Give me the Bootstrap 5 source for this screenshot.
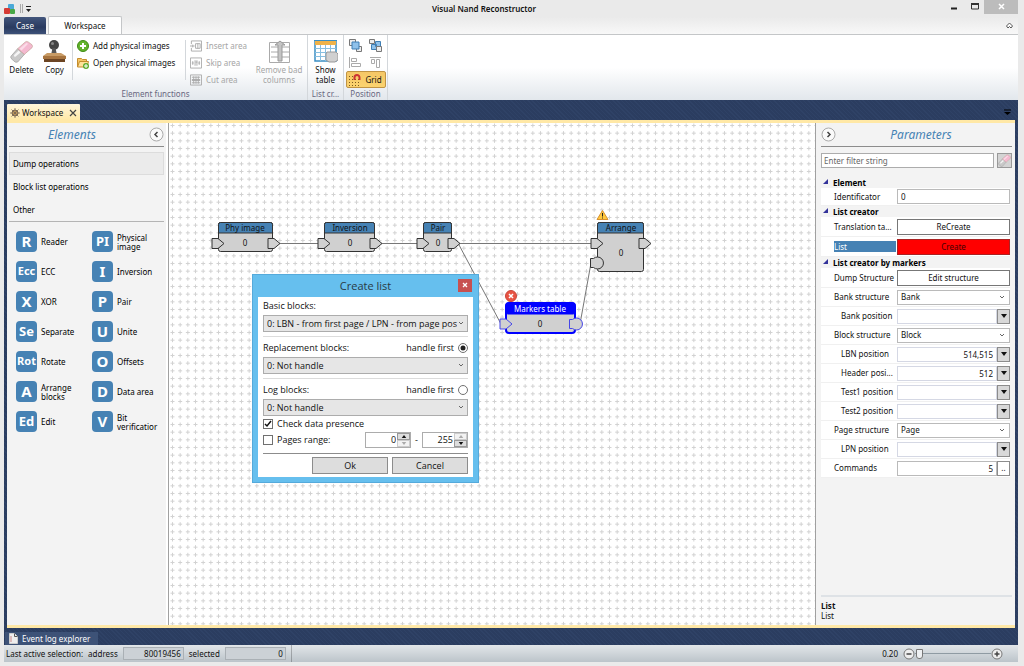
<!DOCTYPE html>
<html lang="en">
<head>
<meta charset="utf-8">
<meta name="viewport" content="width=device-width, initial-scale=1">
<title>Visual Nand Reconstructor</title>
<link href="https://cdn.jsdelivr.net/npm/bootstrap@5.3.0/dist/css/bootstrap.min.css" rel="stylesheet">
<style>
:root{--blue:#4682b4;--navy:#2b3d60;--sand:#ffe8a6}
body{font:8px/10px "Noto Sans","Open Sans",sans-serif;color:#111;background:#eaeaea;padding:0 6px 4px 4px}
button,input,select{font:inherit;color:inherit;border-radius:0}
button{background:none;border:0;padding:0}
svg{display:block;flex:none}
.app-title{height:17px}
.app-title h1{font-size:8px;line-height:17px;font-weight:600;margin:0;padding-right:8px}
.win-btn{width:20px;height:14px}
.win-close{width:34px;height:14px;background:#bcbcbc;color:#fff}
.tab-strip{height:18px;background:linear-gradient(#eaeaea,#f8f8f8);border-bottom:1px solid #c4c6c8}
.case-tab{width:42px;height:17px;background:linear-gradient(#42557c,#2a3b60 60%,#3c5078);color:#fff;font-size:8px;border-radius:2px 2px 0 0}
.work-tab{width:74px;height:18px;background:#fff;border:1px solid #c4c6c8;border-bottom:0;border-radius:2px 2px 0 0;margin-left:2px}
.ribbon{height:65px;background:linear-gradient(#fff 50%,#e2e7ec)}
.rgroup{border-right:1px solid #d3d7db;padding-top:2px}
.rgroup-name{color:#686880;line-height:12px;text-align:center}
.rbig{padding:3px 0 0;text-align:center;display:flex;flex-direction:column;align-items:center;gap:2px;line-height:10px}
.rsmall{display:flex;align-items:center;gap:4px;height:17px;white-space:nowrap}
.off{color:#a5a5a5}
.vsep{width:1px;background:#d3d7db;margin:3px 4px 8px 2px}
.grid-btn{width:40px;height:17px;background:linear-gradient(#f5c766,#fbd36f);border:1px solid #c09444;border-radius:2px}
.main-area{min-height:0;padding:4px 3px 0;background:repeating-linear-gradient(45deg,#2b3d60 0 2px,#2f4266 2px 3px)}
.doc-tab{width:73px;height:16px;background:linear-gradient(#fff5dc,#ffe8a6);border-radius:1px 1px 0 0;padding:1px 3px 0;gap:2px}
.doc-body{min-height:0;border:solid var(--sand);border-width:3px 0;background:#f3f3f3}
.side-l{width:162px;border-right:1px solid #a0a0a0;background:linear-gradient(90deg,#f3f3f3 159px,#fff 159px);padding:0 4px 0 2px}
.side-r{width:200px;border-left:1px solid #a0a0a0;padding:0 3px 0 5px}
.pane-head{height:24px;border-bottom:1px solid #8c8c8c}
.pane-head h2{font-size:12px;line-height:22px;font-style:italic;font-weight:400;color:var(--blue);margin:0;padding-right:14px}
.side-r .pane-head h2{padding-right:6px}
.cats{padding-top:5px;border-bottom:1px solid #b4b4b4}
.cats a{display:block;height:23px;line-height:22px;padding:0 3px;color:#000;text-decoration:none;border:1px solid transparent}
.cats a.on{background:#ebebeb;border-color:#dcdcdc}
.tiles{display:grid;grid-template-columns:76px 1fr;grid-auto-rows:21px;row-gap:9px;padding:9px 0 0 7px}
.tile{display:flex;align-items:center;gap:4px;color:#000;text-align:left;white-space:nowrap;overflow:hidden}
.tile b{flex:none;width:21px;height:21px;line-height:20px;border-radius:4px;background:var(--blue);color:#fff;text-align:center;font-size:15px}
.tile b.md{font-size:13px}
.tile b.sm{font-size:11px}
.tile span{line-height:9px}
.board{min-width:0;background:#fff;overflow:hidden}
.board text{font-size:8px;text-anchor:middle;fill:#111}
.dlg{position:absolute;left:83px;top:151px;width:227px;background:#66bfee;border:1px solid #55aadb;padding:0 5px 5px;font-family:"Open Sans","Noto Sans",sans-serif;font-size:9px}
.dlg h3{font-size:11px;line-height:22px;height:22px;margin:0;text-align:center;font-weight:400;color:#2b3a44}
.dlg-x{position:absolute;right:6px;top:4px;width:14px;height:13px;background:#c75050;color:#fff}
.dlg-in{background:#fff;padding:4px 5px 3px}
.drop{appearance:none;width:100%;border:1px solid #acacac;padding:0 14px 0 4px;background:#fff url("data:image/svg+xml,%3Csvg xmlns='http://www.w3.org/2000/svg' width='6' height='5'%3E%3Cpath d='M1 1l2 2 2-2' fill='none' stroke='%23666'/%3E%3C/svg%3E") no-repeat right 4px center;text-overflow:clip}
.dlg .drop{height:17px;padding:0 10px 0 3px;background-color:#e6e6e6;background-position:right 3px center;display:block}
.rule{border-top:1px solid #dcdcdc;margin:4px 0 3px}
.rule.dark{border-color:#8c8c8c;margin-top:5px}
.dlg-row{height:14px}
.dlg-row.split{padding-top:2px;margin-bottom:3px}
.check-row{padding:3px 0}
.form-check-input.opt{width:10px;height:10px;margin:0;border:1px solid #707070;float:none;box-shadow:none;background-size:10px}
.form-check-input.opt:checked{background-color:#fff;background-image:url("data:image/svg+xml,%3Csvg xmlns='http://www.w3.org/2000/svg' viewBox='0 0 10 10'%3E%3Cpath d='M2 5l2 2 4-5' fill='none' stroke='%23111' stroke-width='1.5'/%3E%3C/svg%3E")}
.form-check-input.opt[type=radio]:checked{background-image:url("data:image/svg+xml,%3Csvg xmlns='http://www.w3.org/2000/svg' viewBox='0 0 10 10'%3E%3Ccircle cx='5' cy='5' r='2.5' fill='%23222'/%3E%3C/svg%3E")}
.form-check-input.opt[type=checkbox]{border-radius:0}
.spin{width:46px;height:16px;border:1px solid #acacac}
.spin input{width:31px;border:0;padding:0 1px;text-align:right}
.spin .ud{width:13px}
.spin .ud button{height:7px;width:13px;background:#ddd;border:1px solid #999;display:flex;align-items:center;justify-content:center}
.spin .ud button:disabled{background:#f2f2f2;border-color:#ccc;color:#aaa}
.push{width:76px;height:17px;background:#ddd;border:1px solid #8c8c8c}
.filter-row{padding-top:6px;gap:3px}
.filter{height:15px;border:1px solid #acacac;padding:0 2px;min-width:0}
.filter::placeholder{color:#666;opacity:1}
.era{width:15px;height:15px;background:#d4d4d4;border:1px solid #999}
.props{margin-right:2px;padding-top:9px}
.prop-head{font-size:8px;line-height:11px;height:11px;font-weight:700;margin:0;padding-left:12px;position:relative;color:#000}
.prop-head::before{content:"";position:absolute;left:2px;top:2px;border:solid transparent;border-width:0 0 5px 5px;border-bottom-color:#33339a}
.prop{display:flex;align-items:center;height:19px;background:#fff;border-bottom:1px solid #f0f0f0;white-space:nowrap}
.prop>label,.prop>span{flex:none;width:76px;padding-left:13px;overflow:hidden}
.prop.sub>label{padding-left:20px}
.prop.tall{height:20px}
.prop.first{height:18px}
.field{flex:1;min-width:0;height:15px;border:1px solid #bababa;padding:0 3px;background-color:#fff}
.prop .btn-face{height:16px;border-color:#777}
.prop .hot{background:red;border-color:#a22;color:#400}
.num{text-align:right;border-color:#d5d8e4}
.dd{width:13px;height:15px;background:#d8d8d8;border:1px solid #8c8c8c;display:flex;align-items:center;justify-content:center}
.picked{background:var(--blue);color:#fff;display:block;line-height:11px;margin-right:1px}
.log-tab{height:13px;width:93px;background:#3d5277;color:#fff;line-height:13px;margin-left:-2px;padding:0 4px;gap:4px}
.log-bar{height:17px;padding-top:4px}
.status{height:17px;background:linear-gradient(#e2e6e9,#bcc4ca);padding:0 15px 0 2px;gap:5px}
.readout{width:61px;height:13px;border:1px solid #aab0b5;text-align:right;line-height:11px;padding-right:2px;background:#ccd1d6}
.zoomer{appearance:none;width:76px;height:12px;background:linear-gradient(#8f9ba3,#8f9ba3) center/100% 1px no-repeat;margin:0}
.zoomer::-webkit-slider-thumb{appearance:none;width:7px;height:10px;border:1px solid #777;background:#eef0f2;border-radius:0 0 3px 3px}
</style>
</head>
<body class="vh-100 d-flex flex-column overflow-hidden">
<svg width="0" height="0" class="position-absolute" aria-hidden="true">
 <defs>
  <symbol id="eraser" viewBox="0 0 24 24"><path d="M1 17 8 9l7 6-7 8q-2 1-4-1l-2-2q-2-2-1-3z" fill="#c9c9c9" stroke="#999" stroke-width=".7"/><path d="m8 9 8-7q1-1 3 0l4 3q1 2 0 3l-8 7z" fill="#f4b9d0" stroke="#b98" stroke-width=".6"/><path d="m4 16 5-5 2 2-6 5z" fill="#f5f5f5"/><path d="m10 9 7-6 2 1-7 7z" fill="#fbdbe7"/></symbol>
  <symbol id="down" viewBox="0 0 6 4"><path d="M0 0h6L3 4z" fill="currentColor"/></symbol>
  <symbol id="up" viewBox="0 0 6 4"><path d="M0 4h6L3 0z" fill="currentColor"/></symbol>
 </defs>
</svg>

<header class="app-title d-flex align-items-start">
 <div class="d-flex align-items-center h-100">
  <svg width="28" height="12" viewBox="0 0 28 12"><rect x="4" y="1" width="6" height="6" rx="1" fill="#4aa9d8"/><rect x="0" y="5" width="6" height="6" rx="1" fill="#d53a34"/><rect x="6" y="6" width="5" height="5" rx="1" fill="#49a846"/><path d="M16.500 1v9M18.500 1v9" stroke="#aaa"/><path d="M22 3.500h5" stroke="#222"/><path d="M22 6h5l-2.500 3z" fill="#222"/></svg>
 </div>
 <h1 class="flex-fill text-center">Visual Nand Reconstructor</h1>
 <button class="win-btn" aria-label="Minimize"><svg width="20" height="14"><path d="M7 8.500h6" stroke="#222" stroke-width="2"/></svg></button>
 <button class="win-btn" aria-label="Maximize"><svg width="20" height="14"><path d="M7.500 4h7v5h-7z" fill="none" stroke="#333"/><path d="M7 4h8" stroke="#333" stroke-width="2"/></svg></button>
 <button class="win-close" aria-label="Close"><svg width="34" height="14"><path d="m15 4 5 5m0-5-5 5" stroke="#fff" stroke-width="1.500"/></svg></button>
</header>

<nav class="tab-strip d-flex align-items-end">
 <button class="case-tab">Case</button>
 <button class="work-tab">Workspace</button>
 <button class="ms-auto mb-1 me-1" aria-label="Collapse ribbon"><svg width="9" height="9"><path d="m1.500 5 3-3 3 3-1.500 2-1.500-1.500L3 7z" fill="#fff" stroke="#555"/></svg></button>
</nav>

<section class="ribbon d-flex">
 <div class="rgroup d-flex flex-column" style="width:304px">
  <div class="d-flex flex-fill">
   <button class="rbig" style="width:35px"><svg width="25" height="23"><use href="#eraser"/></svg>Delete</button>
   <button class="rbig" style="width:31px"><svg width="25" height="23" viewBox="0 0 25 23"><circle cx="12" cy="5" r="5" fill="#444"/><circle cx="10.500" cy="3.500" r="1.500" fill="#888"/><path d="M10.500 8h3l1.500 7h-6z" fill="#555"/><path d="M5 13h14l5 3H1z" fill="#c89b65"/><path d="M1 16h23v3H1z" fill="#a87540"/><path d="M2 19h21v3H2z" fill="#6c4523"/></svg>Copy</button>
   <span class="vsep"></span>
   <div style="width:106px">
    <button class="rsmall"><svg width="12" height="12"><circle cx="6" cy="6" r="5.500" fill="#62b32b" stroke="#3f8a16"/><path d="M6 3v6M3 6h6" stroke="#fff" stroke-width="2"/></svg>Add physical images</button>
    <button class="rsmall"><svg width="12" height="12"><path d="M.5 10V1.500h4l1 1h4V5" fill="#f4c667" stroke="#c58d2c"/><path d="m.5 10 2-5.500h9L10 10z" fill="#ffe29a" stroke="#c58d2c"/><circle cx="9" cy="9" r="3" fill="#5dab2b"/><path d="M9 7v4M7 9h4" stroke="#fff"/></svg>Open physical images</button>
   </div>
   <span class="vsep"></span>
   <div class="off" style="width:60px">
    <button class="rsmall gap-1" disabled><svg width="12" height="12" viewBox="0 0 13 12" fill="none" stroke="#aaa"><path d="M1.500 4V.5h11v11h-11V8M0 6h5M6 3.500h5v5H6zM3 4.500v3M8.500 3v6"/></svg>Insert area</button>
    <button class="rsmall gap-1" disabled><svg width="12" height="12" viewBox="0 0 13 12" fill="none" stroke="#aaa"><path d="M.5.5h12v11H.5zM2 6h2M9 6h2M3 4v4M10 4v4M5.500 3v6M7.500 3v6M6 5h2"/></svg>Skip area</button>
    <button class="rsmall gap-1" disabled><svg width="12" height="12" viewBox="0 0 13 12" fill="none" stroke="#aaa"><path d="M.5.5h12v11H.5zM2 3h9M2 9h9M4 2v8M9 2v8M6.500 2v8"/><path d="M2 6h9" stroke-width="2"/></svg>Cut area</button>
   </div>
   <button class="rbig off ms-auto" style="width:56px" disabled><svg width="23" height="23" fill="none" stroke="#aaa"><path d="M1.500 2.500h20v20h-20zM3 7h7M14 7h7M3 12h7M14 12h7M3 17h7M14 17h7"/><path d="m7 5 5-4 5 4h-3v16h-4V5z" fill="#c4c4c4" stroke="#999"/></svg>Remove bad<br>columns</button>
  </div>
  <div class="rgroup-name">Element functions</div>
 </div>
 <div class="rgroup d-flex flex-column" style="width:36px">
  <button class="rbig flex-fill"><svg width="24" height="23"><path d="M1 1h21v20H1z" fill="#fff" stroke="#3b8fc4" stroke-width="1.500"/><path d="M1 1h21v4H1z" fill="#eeb24a"/><path d="M1 8.500h21M1 12.500h21M1 16.500h21M6.500 5v16M11.500 5v16M16.500 5v16" stroke="#88bfe0"/><path d="M0 .5h23" stroke="#3b8fc4"/><path d="M13 12h9l2 2v6l-3 2h-6l-3-2v-6z" fill="#d0d0d0" stroke="#999"/></svg>Show<br>table</button>
  <div class="rgroup-name">List cr...</div>
 </div>
 <div class="rgroup d-flex flex-column align-items-center" style="width:44px">
  <div class="flex-fill d-grid align-content-start" style="grid-template-columns:20px 14px;grid-template-rows:16px 18px 17px">
   <button aria-label="Bring to front"><svg width="13" height="13"><path d="M.5.5h6v6h-6zM7.500 7.500h5v5h-5z" fill="#eee" stroke="#777"/><path d="M3 3h7v7H3z" fill="#8fc1ea" stroke="#3f7fb5"/></svg></button>
   <button aria-label="Send to back"><svg width="13" height="13"><path d="M6.500 2.500h5v5h-5zM2.500 5.500h5v5h-5z" fill="#8fc1ea" stroke="#3f7fb5"/><path d="M.5.500h5v4h-5zM7.500 7.500h5v5h-5z" fill="#eee" stroke="#777"/></svg></button>
   <button aria-label="Align left" disabled><svg width="13" height="13" fill="none" stroke="#aaa"><path d="M.5 1v11M2.500 2.500h5v3h-5zM2.500 7.500h9v3h-9z"/></svg></button>
   <button aria-label="Align top" disabled><svg width="13" height="13" fill="none" stroke="#aaa"><path d="M1 1.500h11M2.500 3.500h3v4h-3zM7.500 3.500h3v8h-3z"/></svg></button>
   <button class="grid-btn d-flex align-items-center justify-content-center gap-1" style="margin-left:-3px"><svg width="12" height="12"><path d="M0 2.500h4M0 5.500h12M0 8.500h12M0 11.500h12" stroke="#7a5a20" stroke-dasharray="1 2"/><path d="M5.500 6V3.500a2.500 2.500 0 0 1 5 0V6" fill="none" stroke="#c33" stroke-width="2"/></svg>Grid</button>
  </div>
  <div class="rgroup-name">Position</div>
 </div>
</section>

<main class="main-area flex-fill d-flex flex-column">
 <div class="d-flex align-items-end justify-content-between">
  <div class="doc-tab d-flex align-items-center"><svg width="10" height="10"><circle cx="5" cy="5" r="3" fill="#e9b65c" stroke="#765"/><path d="M5 0v10M0 5h10M1.500 1.500l7 7M8.500 1.500l-7 7" stroke="#765" stroke-width=".8"/></svg><span class="flex-fill">Workspace</span><button aria-label="Close tab"><svg width="8" height="8"><path d="m1 1 6 6m0-6L1 7" stroke="#444" stroke-width="1.200"/></svg></button></div>
  <button class="mb-1 me-1" aria-label="Open documents"><svg width="7" height="7"><path d="M0 1h7" stroke="#000"/><path d="M0 3h7L3.500 6z"/></svg></button>
 </div>
 <div class="doc-body flex-fill d-flex">
  <aside class="side-l flex-shrink-0">
   <div class="pane-head d-flex align-items-center"><h2 class="flex-fill text-center">Elements</h2><button aria-label="Collapse elements"><svg width="15" height="15"><circle cx="7.500" cy="7.500" r="6.500" fill="#fafafa" stroke="#aaa"/><path d="m8.500 5-2.500 2.500L8.500 10" fill="none" stroke="#444" stroke-width="1.500"/></svg></button></div>
   <nav class="cats"><a class="on" href="#dump">Dump operations</a><a href="#blocks">Block list operations</a><a href="#other">Other</a></nav>
   <div class="tiles">
    <button class="tile"><b>R</b><span>Reader</span></button><button class="tile"><b class="md">PI</b><span>Physical<br>image</span></button>
    <button class="tile"><b class="sm">Ecc</b><span>ECC</span></button><button class="tile"><b>I</b><span>Inversion</span></button>
    <button class="tile"><b>X</b><span>XOR</span></button><button class="tile"><b>P</b><span>Pair</span></button>
    <button class="tile"><b class="md">Se</b><span>Separate</span></button><button class="tile"><b>U</b><span>Unite</span></button>
    <button class="tile"><b class="sm">Rot</b><span>Rotate</span></button><button class="tile"><b>O</b><span>Offsets</span></button>
    <button class="tile"><b>A</b><span>Arrange<br>blocks</span></button><button class="tile"><b>D</b><span>Data area</span></button>
    <button class="tile"><b class="md">Ed</b><span>Edit</span></button><button class="tile"><b>V</b><span>Bit<br>verificatior</span></button>
   </div>
  </aside>

  <div class="board flex-fill position-relative">
   <svg width="100%" height="100%">
    <defs>
     <pattern id="dots" width="23" height="23" patternUnits="userSpaceOnUse" x="0" y="0"><path d="M3 1v4M1 3h4M10.670 1v4M8.670 3h4M18.330 1v4M16.330 3h4M3 8.670v4M1 10.670h4M10.670 8.670v4M8.670 10.670h4M18.330 8.670v4M16.330 10.670h4M3 16.330v4M1 18.330h4M10.670 16.330v4M8.670 18.330h4M18.330 16.330v4M16.330 18.330h4" transform="translate(.5 -.5)" stroke="#d2d2d2"/></pattern>
     <path id="arrow" d="M-6-5h6l6 5-6 5h-6z"/>
    </defs>
    <rect width="100%" height="100%" fill="url(#dots)"/>
    <g fill="none" stroke="#777"><path d="M109 120.500h41M212 120.500h36M290 120.500h132M289 120l43 81M411 201l11-61"/></g>
    <g stroke="#333" fill="#d0d0d0">
     <rect x="49.500" y="99.500" width="54" height="29" rx="2"/><rect x="155.500" y="99.500" width="50" height="29" rx="2"/><rect x="254.500" y="99.500" width="28" height="29" rx="2"/><rect x="428.500" y="99.500" width="46" height="49" rx="2"/>
     <g fill="#4682b4"><path d="M49.500 110v-8.500q0-2 2-2h50q2 0 2 2v8.500zM155.500 110v-8.500q0-2 2-2h46q2 0 2 2v8.500zM254.500 110v-8.500q0-2 2-2h24q2 0 2 2v8.500zM428.500 110v-8.500q0-2 2-2h42q2 0 2 2v8.500z"/></g>
     <use href="#arrow" x="49" y="120.500"/><use href="#arrow" x="105" y="120.500"/><use href="#arrow" x="155" y="120.500"/><use href="#arrow" x="207" y="120.500"/><use href="#arrow" x="254" y="120.500"/><use href="#arrow" x="285" y="120.500"/><use href="#arrow" x="428" y="120.500"/><use href="#arrow" x="476" y="120.500"/>
     <path d="M421.500 135.500h3a6 6 0 1 1 0 9h-3z"/>
    </g>
    <g stroke="#00f" fill="#d0d0d0"><rect x="337" y="180" width="69" height="30" rx="3" stroke-width="2"/><rect x="337" y="180" width="69" height="11" rx="2" fill="#00f"/><g stroke="#4646e8"><use href="#arrow" x="337" y="201"/><path d="M400.500 196.500h3a6 6 0 1 1 0 9h-3z"/></g></g>
    <text x="76" y="108">Phy image</text><text x="181" y="108">Inversion</text><text x="269" y="108">Pair</text><text x="452" y="108">Arrange</text><text x="371" y="189" style="fill:#fff">Markers table</text>
    <text x="76" y="123">0</text><text x="181" y="123">0</text><text x="269" y="123">0</text><text x="452" y="133">0</text><text x="371" y="204">0</text>
    <path d="m433.500 87.500 5.500 9h-11z" fill="#ffc83c" stroke="#d8902c" stroke-linejoin="round"/><path d="M433.500 90v3.500M433.500 94.500v1" stroke="#222"/>
    <circle cx="342" cy="173" r="5.500" fill="#e85444" stroke="#c8453a"/><path d="m340 171 4 4m0-4-4 4" stroke="#fff" stroke-width="1.500"/>
   </svg>

   <form class="dlg" role="dialog" aria-labelledby="dlgTitle">
    <h3 id="dlgTitle">Create list</h3>
    <button type="button" class="dlg-x" aria-label="Close"><svg width="14" height="13"><path d="m5 4 4 4m0-4L5 8" stroke="#fff" stroke-width="1.300"/></svg></button>
    <div class="dlg-in">
     <label class="d-block dlg-row" for="basic">Basic blocks:</label>
     <select class="drop" id="basic"><option>0: LBN - from first page / LPN - from page pos</option></select>
     <div class="rule"></div>
     <div class="dlg-row split d-flex justify-content-between align-items-center"><label for="repl">Replacement blocks:</label><span class="d-flex align-items-center gap-1"><label for="r1">handle first</label><input class="form-check-input opt" type="radio" name="first" id="r1" checked></span></div>
     <select class="drop" id="repl"><option>0: Not handle</option></select>
     <div class="rule"></div>
     <div class="dlg-row split d-flex justify-content-between align-items-center"><label for="logb">Log blocks:</label><span class="d-flex align-items-center gap-1"><label for="r2">handle first</label><input class="form-check-input opt" type="radio" name="first" id="r2"></span></div>
     <select class="drop" id="logb"><option>0: Not handle</option></select>
     <div class="check-row d-flex align-items-center gap-1"><input class="form-check-input opt" type="checkbox" id="chk" checked><label for="chk">Check data presence</label></div>
     <div class="d-flex align-items-center gap-1"><input class="form-check-input opt" type="checkbox" id="rng"><label for="rng" class="me-auto">Pages range:</label>
      <div class="spin d-flex"><input aria-label="First page" value="0"><div class="ud"><button type="button" aria-label="Up"><svg width="6" height="3"><use href="#up"/></svg></button><button type="button" aria-label="Down" disabled><svg width="6" height="3"><use href="#down"/></svg></button></div></div>
      <span>-</span>
      <div class="spin d-flex"><input aria-label="Last page" value="255"><div class="ud"><button type="button" aria-label="Up" disabled><svg width="6" height="3"><use href="#up"/></svg></button><button type="button" aria-label="Down"><svg width="6" height="3"><use href="#down"/></svg></button></div></div>
     </div>
     <div class="rule dark"></div>
     <div class="d-flex justify-content-end gap-1"><button type="button" class="push">Ok</button><button type="button" class="push">Cancel</button></div>
    </div>
   </form>
  </div>

  <aside class="side-r flex-shrink-0 d-flex flex-column">
   <div class="pane-head d-flex align-items-center"><button aria-label="Collapse parameters"><svg width="15" height="15"><circle cx="7.500" cy="7.500" r="6.500" fill="#fafafa" stroke="#aaa"/><path d="m6.500 5L9 7.500 6.500 10" fill="none" stroke="#444" stroke-width="1.500"/></svg></button><h2 class="flex-fill text-center">Parameters</h2></div>
   <div class="filter-row d-flex"><input class="filter flex-fill" placeholder="Enter filter string" aria-label="Filter"><button class="era" aria-label="Clear filter"><svg width="13" height="13"><use href="#eraser"/></svg></button></div>
   <div class="props">
    <h4 class="prop-head">Element</h4>
    <div class="prop first"><label for="p1">Identificator</label><input class="field" id="p1" value="0"></div>
    <h4 class="prop-head">List creator</h4>
    <div class="prop tall"><span>Translation ta...</span><button class="field btn-face">ReCreate</button></div>
    <div class="prop tall"><span><span class="picked">List</span></span><button class="field btn-face hot">Create</button></div>
    <h4 class="prop-head">List creator by markers</h4>
    <div class="prop tall"><span>Dump Structure</span><button class="field btn-face">Edit structure</button></div>
    <div class="prop"><label for="p2">Bank structure</label><select class="field drop" id="p2"><option>Bank</option></select></div>
    <div class="prop sub"><label for="p3">Bank position</label><input class="field num" id="p3"><button class="dd" aria-label="Choose"><svg width="6" height="4"><use href="#down"/></svg></button></div>
    <div class="prop"><label for="p4">Block structure</label><select class="field drop" id="p4"><option>Block</option></select></div>
    <div class="prop sub"><label for="p5">LBN position</label><input class="field num" id="p5" value="514,515"><button class="dd" aria-label="Choose"><svg width="6" height="4"><use href="#down"/></svg></button></div>
    <div class="prop sub"><label for="p6">Header posi...</label><input class="field num" id="p6" value="512"><button class="dd" aria-label="Choose"><svg width="6" height="4"><use href="#down"/></svg></button></div>
    <div class="prop sub"><label for="p7">Test1 position</label><input class="field num" id="p7"><button class="dd" aria-label="Choose"><svg width="6" height="4"><use href="#down"/></svg></button></div>
    <div class="prop sub"><label for="p8">Test2 position</label><input class="field num" id="p8"><button class="dd" aria-label="Choose"><svg width="6" height="4"><use href="#down"/></svg></button></div>
    <div class="prop"><label for="p9">Page structure</label><select class="field drop" id="p9"><option>Page</option></select></div>
    <div class="prop sub"><label for="p10">LPN position</label><input class="field num" id="p10"><button class="dd" aria-label="Choose"><svg width="6" height="4"><use href="#down"/></svg></button></div>
    <div class="prop"><label for="p11">Commands</label><input class="field text-end" id="p11" value="5"><button class="dd bg-white" aria-label="More">..</button></div>
   </div>
   <div class="mt-auto border-top border-2 pt-1 pb-1"><div class="fw-bold">List</div><div>List</div></div>
  </aside>
 </div>
 <div class="log-bar"><button class="log-tab d-flex align-items-center"><svg width="9" height="11"><path d="M.5.500h5l3 3v7h-8z" fill="#eee" stroke="#ccc"/><path d="M5.500.500v3h3" fill="none" stroke="#555"/><path d="M2 3v6" stroke="#c88"/></svg>Event log explorer</button></div>
</main>

<footer class="status d-flex align-items-center">
 <span>Last active selection:</span><span>address</span><span class="readout">80019456</span><span>selected</span><span class="readout">0</span>
 <span class="vr"></span>
 <label class="ms-auto" for="zoom">0.20</label>
 <div class="d-flex align-items-center">
  <button aria-label="Zoom out"><svg width="12" height="12"><circle cx="6" cy="6" r="5" fill="#eee" stroke="#777"/><path d="M3.500 6h5" stroke="#444" stroke-width="1.500"/></svg></button>
  <input class="zoomer" id="zoom" type="range" min="0" max="100" value="2">
  <button aria-label="Zoom in"><svg width="12" height="12"><circle cx="6" cy="6" r="5" fill="#eee" stroke="#777"/><path d="M3.500 6h5M6 3.500v5" stroke="#444" stroke-width="1.500"/></svg></button>
 </div>
</footer>
<script src="https://cdn.jsdelivr.net/npm/bootstrap@5.3.0/dist/js/bootstrap.bundle.min.js"></script>
</body>
</html>
